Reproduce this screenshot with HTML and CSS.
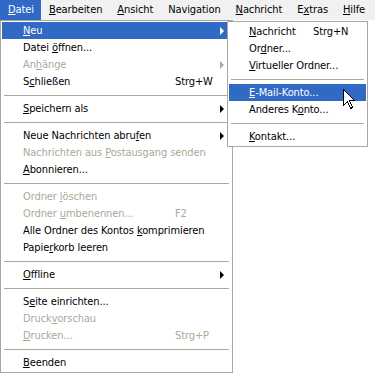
FILE: index.html
```html
<!DOCTYPE html>
<html lang="de">
<head>
<meta charset="utf-8">
<title>Datei-Menü</title>
<link rel="stylesheet" href="styles.css">
</head>
<body>
<div class="menubar">
  <span class="mb-item active"><u>D</u>atei</span>
  <span class="mb-item"><u>B</u>earbeiten</span>
  <span class="mb-item"><u>A</u>nsicht</span>
  <span class="mb-item">Navi<u>g</u>ation</span>
  <span class="mb-item"><u>N</u>achricht</span>
  <span class="mb-item">E<u>x</u>tras</span>
  <span class="mb-item"><u>H</u>ilfe</span>
</div>

<div class="menu main-menu">
  <div class="item hl"><span class="label"><u>N</u>eu</span><span class="key"></span><span class="arrow"></span></div>
  <div class="item"><span class="label">Datei <u>ö</u>ffnen...</span></div>
  <div class="item dis"><span class="label">An<u>h</u>änge</span><span class="key"></span><span class="arrow"></span></div>
  <div class="item"><span class="label">S<u>c</u>hließen</span><span class="key">Strg+W</span></div>
  <div class="sep"></div>
  <div class="item"><span class="label"><u>S</u>peichern als</span><span class="key"></span><span class="arrow"></span></div>
  <div class="sep"></div>
  <div class="item"><span class="label">Neue Nachrichten abru<u>f</u>en</span><span class="key"></span><span class="arrow"></span></div>
  <div class="item dis"><span class="label">Nachrichten aus <u>P</u>ostausgang senden</span></div>
  <div class="item"><span class="label"><u>A</u>bonnieren...</span></div>
  <div class="sep"></div>
  <div class="item dis"><span class="label">Ordner <u>l</u>öschen</span></div>
  <div class="item dis"><span class="label">Ordner <u>u</u>mbenennen...</span><span class="key">F2</span></div>
  <div class="item"><span class="label">Alle Ordner des Kontos <u>k</u>omprimieren</span></div>
  <div class="item"><span class="label">Papie<u>r</u>korb leeren</span></div>
  <div class="sep"></div>
  <div class="item"><span class="label"><u>O</u>ffline</span><span class="key"></span><span class="arrow"></span></div>
  <div class="sep"></div>
  <div class="item"><span class="label">S<u>e</u>ite einrichten...</span></div>
  <div class="item dis"><span class="label">Druck<u>v</u>orschau</span></div>
  <div class="item dis"><span class="label"><u>D</u>rucken...</span><span class="key">Strg+P</span></div>
  <div class="sep"></div>
  <div class="item"><span class="label"><u>B</u>eenden</span></div>
</div>

<div class="menu sub-menu">
  <div class="item"><span class="label"><u>N</u>achricht</span><span class="key">Strg+N</span></div>
  <div class="item"><span class="label">Or<u>d</u>ner...</span></div>
  <div class="item"><span class="label"><u>V</u>irtueller Ordner...</span></div>
  <div class="sep"></div>
  <div class="item hl"><span class="label"><u>E</u>-Mail-Konto...</span></div>
  <div class="item"><span class="label">Anderes K<u>o</u>nto...</span></div>
  <div class="sep"></div>
  <div class="item"><span class="label"><u>K</u>ontakt...</span></div>
</div>

<svg class="cursor" width="13" height="21" viewBox="0 0 13 21" aria-hidden="true">
  <path d="M0.5 0.5 L0.5 16.5 L4.5 12.5 L7.5 19.5 L9.5 18.5 L6.5 11.5 L11.5 11.5 Z" fill="#fff" stroke="#000" stroke-width="1" shape-rendering="crispEdges"/>
</svg>
</body>
</html>
```

FILE: styles.css
```css
html, body {
  margin: 0;
  padding: 0;
  background: #ffffff;
}

body {
  width: 375px;
  height: 380px;
  position: relative;
  overflow: hidden;
  font-family: "DejaVu Sans Condensed", "Liberation Sans", sans-serif;
  font-size: 11px;
  letter-spacing: -0.1px;
  color: #000;
}

u {
  text-decoration: underline;
  text-underline-offset: 1px;
}

.menubar {
  display: flex;
  height: 20px;
  background: #f1f1f1;
}

.mb-item {
  padding: 0 7px 0 8px;
  line-height: 20px;
  white-space: nowrap;
}

.mb-item.active {
  background: #316ac5;
  color: #fff;
}

.menu {
  position: absolute;
  background: #fff;
  border: 1px solid #aca899;
  padding: 1px;
  box-sizing: border-box;
}

.main-menu {
  left: 0;
  top: 20px;
  width: 233px;
}

.sub-menu {
  left: 227px;
  top: 21px;
  width: 141px;
}

.item {
  display: flex;
  align-items: center;
  height: 17px;
  line-height: 17px;
  padding-left: 21px;
  white-space: nowrap;
}

.label {
  flex: 0 0 152px;
}

.key {
  flex: 0 0 45px;
}

.sub-menu .item {
  padding-left: 20px;
}

.sub-menu .label {
  flex-basis: 64px;
}

.arrow {
  width: 0;
  height: 0;
  border-top: 4px solid transparent;
  border-bottom: 4px solid transparent;
  border-left: 4px solid #000;
}

.item.hl {
  background: #316ac5;
  color: #fff;
}

.item.hl .arrow {
  border-left-color: #fff;
}

.item.dis {
  color: #aca899;
}

.item.dis .arrow {
  border-left-color: #aca899;
}

.sep {
  height: 10px;
  display: flex;
  align-items: center;
  padding: 0 2px;
}

.sep::before {
  content: "";
  flex: 1;
  height: 1px;
  background: #aca899;
}

.cursor {
  position: absolute;
  left: 343px;
  top: 89px;
}
```
